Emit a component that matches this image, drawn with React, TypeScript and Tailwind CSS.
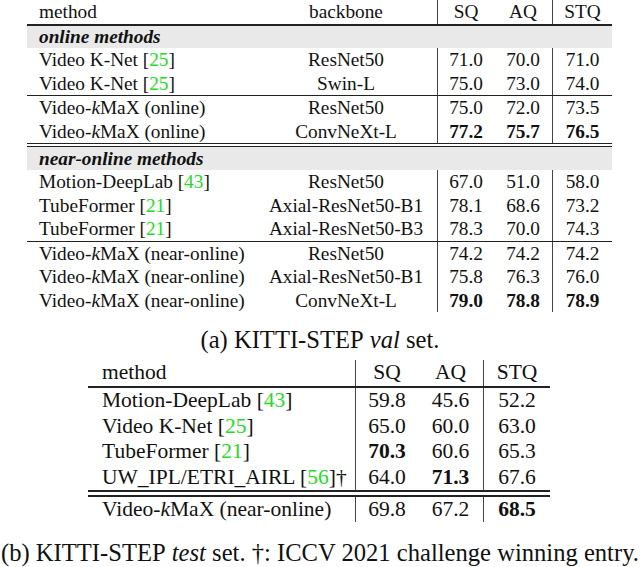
import React from 'react';

const G = ({ n }: { n: string }) => <span className="text-[#22dd22]">{n}</span>;

type Cell = React.ReactNode;

function TopRow({ m, b, v, bold, h = 'h-[23.5px]' }: { m: Cell; b: Cell; v: string[]; bold?: boolean; h?: string }) {
    return (
        <div className={`grid grid-cols-[228px_182px_57px_58px_60px] items-center ${h}`}>
            <div className="pl-[12px] whitespace-nowrap">{m}</div>
            <div className="text-center whitespace-nowrap">{b}</div>
            <div className={`h-full flex items-center justify-center border-l border-[#444] ${bold ? 'font-bold' : ''}`}>{v[0]}</div>
            <div className={`text-center ${bold ? 'font-bold' : ''}`}>{v[1]}</div>
            <div className={`h-full flex items-center justify-center border-l border-[#444] ${bold ? 'font-bold' : ''}`}>{v[2]}</div>
        </div>
    );
}

function BotRow({ m, v, b = [], h = 'h-[25.6px]' }: { m: Cell; v: string[]; b?: number[]; h?: string }) {
    return (
        <div className={`grid grid-cols-[267px_63px_65px_67px] items-center ${h}`}>
            <div className="pl-[14px] whitespace-nowrap">{m}</div>
            <div className={`h-full flex items-center justify-center border-l border-[#444] ${b.includes(0) ? 'font-bold' : ''}`}>{v[0]}</div>
            <div className={`text-center ${b.includes(1) ? 'font-bold' : ''}`}>{v[1]}</div>
            <div className={`h-full flex items-center justify-center border-l border-[#444] ${b.includes(2) ? 'font-bold' : ''}`}>{v[2]}</div>
        </div>
    );
}

const KMax = ({ s }: { s: string }) => (
    <>
        Video-<i>k</i>MaX ({s})
    </>
);

export default function App() {
    return (
        <div className="w-[640px] h-[567px] bg-white text-[#111] font-[family-name:'Liberation_Serif',serif] overflow-hidden">
            {/* (a) val set */}
            <div className="ml-[27px] w-[585px] text-[19.3px] leading-none">
                <TopRow h="h-[24px]" m="method" b="backbone" v={['SQ', 'AQ', 'STQ']} />
                <div className="h-[2px] bg-[#222]" />
                <div className="h-[22px] bg-[#e9e9e9] flex items-center pl-[12px] font-bold italic">online methods</div>
                <TopRow m={<>Video K-Net [<G n="25" />]</>} b="ResNet50" v={['71.0', '70.0', '71.0']} />
                <TopRow m={<>Video K-Net [<G n="25" />]</>} b="Swin-L" v={['75.0', '73.0', '74.0']} />
                <div className="h-px bg-[#222]" />
                <TopRow m={<KMax s="online" />} b="ResNet50" v={['75.0', '72.0', '73.5']} />
                <TopRow m={<KMax s="online" />} b="ConvNeXt-L" v={['77.2', '75.7', '76.5']} bold />
                <div className="h-px bg-[#222]" />
                <div className="h-[2px]" />
                <div className="h-px bg-[#222]" />
                <div className="h-[23px] bg-[#e9e9e9] flex items-center pl-[12px] font-bold italic">near-online methods</div>
                <TopRow m={<>Motion-DeepLab [<G n="43" />]</>} b="ResNet50" v={['67.0', '51.0', '58.0']} />
                <TopRow m={<>TubeFormer [<G n="21" />]</>} b="Axial-ResNet50-B1" v={['78.1', '68.6', '73.2']} />
                <TopRow m={<>TubeFormer [<G n="21" />]</>} b="Axial-ResNet50-B3" v={['78.3', '70.0', '74.3']} />
                <div className="h-px bg-[#222]" />
                <TopRow m={<KMax s="near-online" />} b="ResNet50" v={['74.2', '74.2', '74.2']} />
                <TopRow m={<KMax s="near-online" />} b="Axial-ResNet50-B1" v={['75.8', '76.3', '76.0']} />
                <TopRow m={<KMax s="near-online" />} b="ConvNeXt-L" v={['79.0', '78.8', '78.9']} bold />
            </div>

            <div className="mt-[14px] h-[28px] flex items-center justify-center text-[24.6px] whitespace-nowrap">
                (a) KITTI-STEP&nbsp;<i>val</i>&nbsp;set.
            </div>

            {/* (b) test set */}
            <div className="mt-[6px] ml-[88px] w-[462px] text-[21.5px] leading-none">
                <BotRow h="h-[26px]" m="method" v={['SQ', 'AQ', 'STQ']} />
                <div className="h-[2px] bg-[#222]" />
                <BotRow m={<>Motion-DeepLab [<G n="43" />]</>} v={['59.8', '45.6', '52.2']} />
                <BotRow m={<>Video K-Net [<G n="25" />]</>} v={['65.0', '60.0', '63.0']} />
                <BotRow m={<>TubeFormer [<G n="21" />]</>} v={['70.3', '60.6', '65.3']} b={[0]} />
                <BotRow m={<>UW_IPL/ETRI_AIRL [<G n="56" />]†</>} v={['64.0', '71.3', '67.6']} b={[1]} />
                <div className="h-[1.5px] bg-[#222]" />
                <div className="h-[3.5px]" />
                <div className="h-[1.5px] bg-[#222]" />
                <BotRow m={<KMax s="near-online" />} v={['69.8', '67.2', '68.5']} b={[2]} />
            </div>

            <div className="mt-[17px] h-[28px] flex items-center justify-center text-[24.6px] whitespace-nowrap">
                (b) KITTI-STEP&nbsp;<i>test</i>&nbsp;set. †: ICCV 2021 challenge winning entry.
            </div>
        </div>
    );
}
